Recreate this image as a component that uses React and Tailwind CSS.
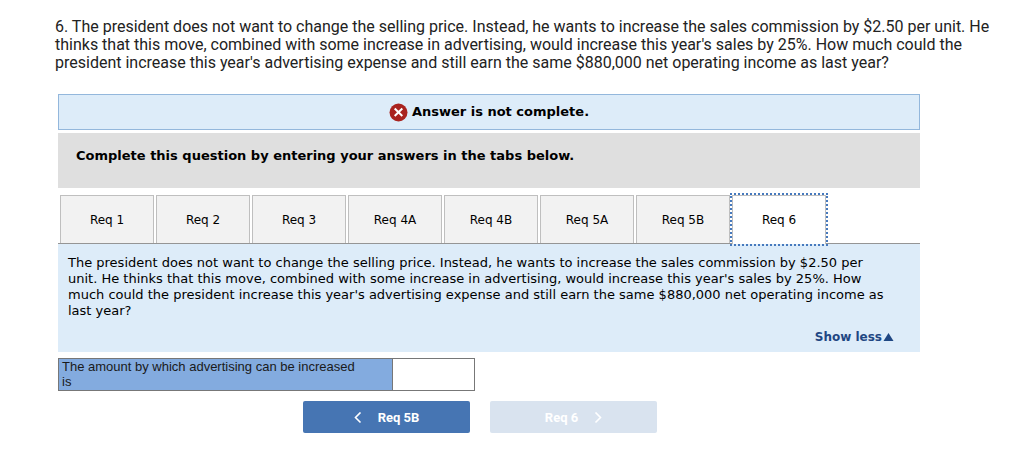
import { useState } from "react";

const tabs = ["Req 1", "Req 2", "Req 3", "Req 4A", "Req 4B", "Req 5A", "Req 5B", "Req 6"];

const Chevron = ({ path }) => (
  <svg className="w-2 h-3" viewBox="0 0 8 12" fill="none" stroke="currentColor" strokeWidth="1.6" aria-hidden="true">
    <path d={path} />
  </svg>
);

const App = () => {
  const [active, setActive] = useState("Req 6");
  const [amount, setAmount] = useState("");

  return (
    <main className="bg-white pt-[18px] pb-5 text-black font-['DejaVu_Sans',sans-serif]">
      <p className="pl-[55px] pr-5 text-[16px] leading-[18px] text-[#222] font-['Roboto',sans-serif]">
        6. The president does not want to change the selling price. Instead, he wants to increase the sales commission by
        $2.50 per unit. He thinks that this move, combined with some increase in advertising, would increase this year's
        sales by 25%. How much could the president increase this year's advertising expense and still earn the same
        $880,000 net operating income as last year?
      </p>

      <div className="mt-[22px] ml-[58px] mr-[104px]">
        {/* result banner */}
        <div className="flex h-9 items-center justify-center gap-1 border border-[#93b7dc] bg-[#ddecf9] text-[13px] font-bold">
          <svg className="size-[19px]" viewBox="0 0 19 19" aria-hidden="true">
            <circle cx="9.5" cy="9.5" r="9" fill="#a9231f" />
            <path d="M5.7 5.5 L13.3 13 M13.3 5.5 L5.7 13" stroke="#fff" strokeWidth="2" />
          </svg>
          <span>Answer is not complete.</span>
        </div>

        <h2 className="mt-[3px] h-[55px] bg-[#dfdfdf] px-[18px] pt-[15px] text-[13px] leading-4 font-bold">
          Complete this question by entering your answers in the tabs below.
        </h2>

        {/* requirement tabs */}
        <div role="tablist" className="mt-[7px] flex gap-0.5 border-b border-[#959595] pl-0.5">
          {tabs.map((tab) => (
            <button
              key={tab}
              type="button"
              role="tab"
              aria-selected={tab === active}
              onClick={() => setActive(tab)}
              className={`w-[94px] text-[12px] border border-b-0 border-[#bfbfbf] ${
                tab === active
                  ? "-mb-px h-[49px] bg-white pb-px outline-2 outline-dotted outline-[#4679bd]"
                  : "h-12 bg-[#f2f2f2]"
              }`}
            >
              {tab}
            </button>
          ))}
        </div>

        <section className="bg-[#ddecf9] px-[10px] pt-[11px] pb-[7px]">
          <p className="pr-[22px] text-[13px] leading-4">
            The president does not want to change the selling price. Instead, he wants to increase the sales commission
            by $2.50 per unit. He thinks that this move, combined with some increase in advertising, would increase this
            year's sales by 25%. How much could the president increase this year's advertising expense and still earn
            the same $880,000 net operating income as last year?
          </p>
          <div className="mt-[10px] flex justify-end pr-4">
            <button type="button" className="flex items-center text-[12px] leading-4 font-bold text-[#1f4783]">
              Show less
              <svg className="ml-px w-[11px] h-[10px]" viewBox="0 0 11 10" fill="currentColor" aria-hidden="true">
                <path d="M5.5 1 L10.5 9 H0.5 Z" />
              </svg>
            </button>
          </div>
        </section>

        <table className="mt-[6px] border-collapse font-['Liberation_Sans',sans-serif] text-[13px] leading-[15px] text-[#1a1a1a]">
          <tbody>
            <tr>
              <th scope="row" className="w-[334px] border border-[#777] bg-[#83abdf] px-[3px] text-left align-top font-normal">
                <label htmlFor="amount" className="block">
                  The amount by which advertising can be increased
                  <br />
                  is
                </label>
              </th>
              <td className="w-[82px] border border-[#777] p-0">
                <input
                  id="amount"
                  type="text"
                  value={amount}
                  onChange={(e) => setAmount(e.target.value)}
                  className="block h-[31px] w-full px-1 text-right"
                />
              </td>
            </tr>
          </tbody>
        </table>

        {/* previous / next */}
        <div className="mt-[10px] mr-[18px] flex justify-center gap-5 font-['Roboto',sans-serif] text-[13px] font-bold text-white">
          <button
            type="button"
            onClick={() => setActive("Req 5B")}
            className="flex h-8 w-[167px] items-center justify-center gap-4 rounded-xs bg-[#4675b3] pt-0.5"
          >
            <Chevron path="M6.5 0.5 L1.5 5.5 L6.5 10.5" />
            Req 5B
          </button>
          <button type="button" disabled className="flex h-8 w-[167px] items-center justify-center gap-4 rounded-xs bg-[#d9e3ef] pt-0.5">
            Req 6
            <Chevron path="M1.5 0.5 L6.5 5.5 L1.5 10.5" />
          </button>
        </div>
      </div>
    </main>
  );
};

export default App;
